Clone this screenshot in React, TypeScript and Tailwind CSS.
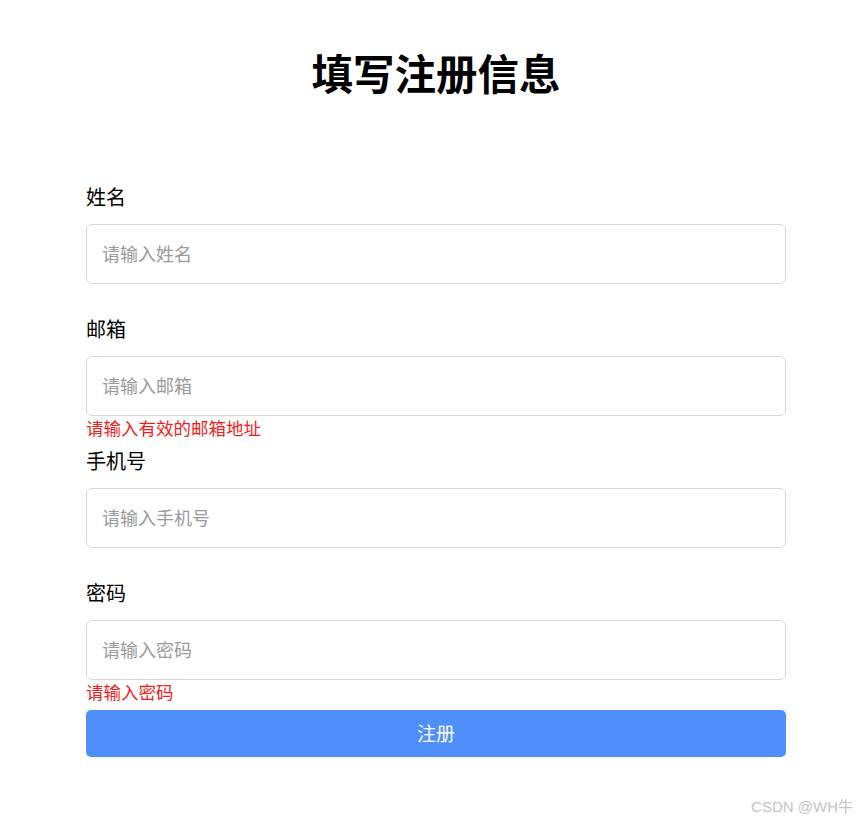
import React from "react";

const fields = [
  { label: "姓名", placeholder: "请输入姓名", error: "" },
  { label: "邮箱", placeholder: "请输入邮箱", error: "请输入有效的邮箱地址" },
  { label: "手机号", placeholder: "请输入手机号", error: "" },
  { label: "密码", placeholder: "请输入密码", error: "请输入密码" },
];

export default function App() {
  return (
    <div
      className="relative w-[857px] h-[823px] bg-white text-black overflow-hidden"
      style={{ fontFamily: '"Noto Sans CJK SC", "Liberation Sans", sans-serif' }}
    >
      <div className="w-[700px] ml-[86px] flex flex-col">
        <h1 className="mt-[47px] h-[50px] leading-[50px] text-center text-[41.5px] font-bold">
          填写注册信息
        </h1>
        <form className="mt-[85px] flex flex-col gap-[6px]" onSubmit={(e) => e.preventDefault()}>
          {fields.map((f) => (
            <div key={f.label} className="flex flex-col">
              <label className="text-[20px] leading-[30px]">{f.label}</label>
              <input
                type="text"
                placeholder={f.placeholder}
                className="mt-[12px] h-[60px] w-full border border-[#d4d7de] rounded-[6px] px-[15px] pb-[2px] text-[18px] outline-none placeholder:text-[#9a9a9a]"
              />
              <div className="h-[24px] leading-[24px] text-[17.5px] text-[#f21c1c]">{f.error}</div>
            </div>
          ))}
          <button
            type="submit"
            className="h-[47px] w-full rounded-[5px] bg-[#4e8ffb] text-white text-[19px]"
          >
            注册
          </button>
        </form>
      </div>
      <div
        className="absolute right-[4px] bottom-[5px] text-[15px] text-[#c4c4c4]"
        style={{ fontFamily: '"Liberation Sans", "Noto Sans CJK SC", sans-serif' }}
      >
        CSDN @WH牛
      </div>
    </div>
  );
}
